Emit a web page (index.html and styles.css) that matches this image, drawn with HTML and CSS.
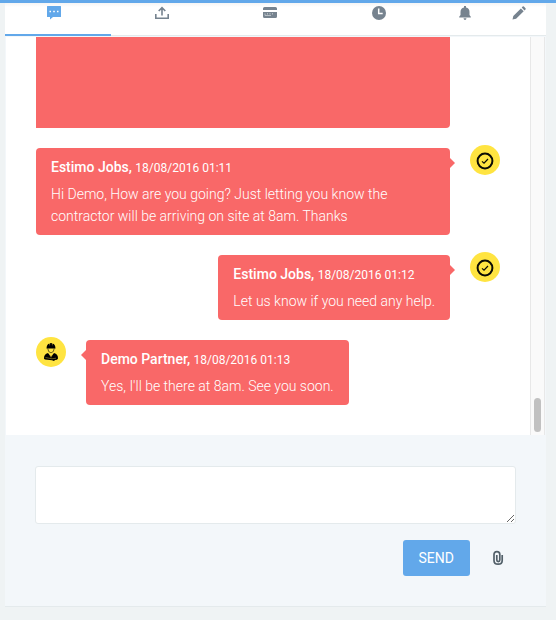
FILE: index.html
```html
<!DOCTYPE html>
<html lang="en">
<head>
<meta charset="utf-8">
<title>Job messages</title>
<link rel="stylesheet" href="styles.css">
</head>
<body>
<svg class="defs" aria-hidden="true">
  <symbol id="check" viewBox="0 0 30 30">
    <circle cx="15" cy="16" r="7.4" fill="none" stroke="#0b0b05" stroke-width="2"/>
    <path d="M12 16.400l2 1.800 4-4.200" fill="none" stroke="#0b0b05" stroke-width="1.200"/>
  </symbol>
</svg>
<main class="card">
  <nav class="tabs">
    <a class="tab active" href="#messages" aria-label="Messages"><svg width="16" height="16" viewBox="0 0 16 16"><path fill="currentColor" d="M1.500 1h13q.5 0 .5.500v10q0 .5-.5.500H7l-3 2.500V12H1.500Q1 12 1 11.500v-10q0-.5.500-.5z"/><path fill="#fff" d="M3.500 5.700H5v1.600H3.500zM7.200 5.700h1.600v1.600H7.200zM11 5.700h1.500v1.600H11z"/></svg></a>
    <a class="tab" href="#upload" aria-label="Upload"><svg width="16" height="16" viewBox="0 0 16 16"><path fill="none" stroke="currentColor" stroke-width="1.600" d="M1.800 9v4.200h12.400V9M8 10.500V3M4.700 6L8 2.700 11.300 6"/></svg></a>
    <a class="tab" href="#payments" aria-label="Payments"><svg width="16" height="16" viewBox="0 0 16 16"><path fill="currentColor" d="M2.500 2h11Q15 2 15 3.500V5H1V3.500Q1 2 2.500 2zM1 7h14v4.500q0 1.500-1.500 1.500h-11Q1 13 1 11.500z"/><path fill="none" stroke="#c5cbd0" stroke-width=".8" d="M3 8.500v2h6M5.500 8v1.500M8 8v1.500M10.500 9.500V8"/></svg></a>
    <a class="tab" href="#history" aria-label="History"><svg width="16" height="16" viewBox="0 0 16 16"><circle cx="8" cy="8" r="7" fill="currentColor"/><path fill="none" stroke="#fff" stroke-width="1.500" d="M7.700 3.500v5h4"/></svg></a>
    <a class="tab" href="#alerts" aria-label="Alerts"><svg width="16" height="16" viewBox="0 0 16 16"><path fill="currentColor" d="M7 2.500V1h2v1.500q3.500.8 3.500 4.500v3l1.300 1.700v.8H2.200v-.8L3.500 10V7Q3.500 3.300 7 2.500zM6.500 13.300h3q-.2 1.700-1.500 1.700t-1.500-1.700z"/></svg></a>
    <a class="tab" href="#edit" aria-label="Edit"><svg width="16" height="16" viewBox="0 0 16 16"><path fill="currentColor" d="M1.500 14.500l.8-3.600 7.600-7.500 2.800 2.800-7.600 7.500zM10.700 2.600l1-1q.6-.5 1.200 0l1.600 1.600q.5.600 0 1.200l-1 1z"/></svg></a>
  </nav>
  <section class="chat">
    <div class="messages">
      <article class="message sent"><div class="bubble attachment"></div></article>
      <article class="message sent">
        <div class="bubble">
          <p class="meta"><strong>Estimo Jobs,</strong> <time>18/08/2016 01:11</time></p>
          <p>Hi Demo, How are you going? Just letting you know the contractor will be arriving on site at 8am. Thanks</p>
        </div>
        <svg class="avatar" viewBox="0 0 30 30"><use href="#check"/></svg>
      </article>
      <article class="message sent">
        <div class="bubble">
          <p class="meta"><strong>Estimo Jobs,</strong> <time>18/08/2016 01:12</time></p>
          <p>Let us know if you need any help.</p>
        </div>
        <svg class="avatar" viewBox="0 0 30 30"><use href="#check"/></svg>
      </article>
      <article class="message received">
        <svg class="avatar" viewBox="0 0 30 30"><path d="M10.500 11.500q.2-4.500 3-5l.4 2.500.3-3h1.600l.3 3 .4-2.500q2.800.5 3 5z"/><path fill="none" stroke="#0b0b05" stroke-width=".6" d="M11.800 11.500q.2 3.800 3.200 4.400 3-.6 3.200-4.400"/><path d="M8 21.500q-.2-4.500 4-5.500l3 3.500 3-3.500q4.200 1 4 5.500-.5 1.500-3 1.500l-1 1-2-.7-7-.8q-1-.3-1-1z"/><path fill="none" stroke="#ffe441" stroke-width=".4" d="M13 16.300l2 4 2-4M9.500 20.500l6.500 1.300 4-.6"/></svg>
        <div class="bubble">
          <p class="meta"><strong>Demo Partner,</strong> <time>18/08/2016 01:13</time></p>
          <p>Yes, I'll be there at 8am. See you soon.</p>
        </div>
      </article>
    </div>
    <div class="track"><div class="thumb"></div></div>
  </section>
  <form class="composer">
    <textarea aria-label="Message"></textarea>
    <div class="actions">
      <button class="send" type="button">SEND</button>
      <button class="attach" type="button" aria-label="Attach a file"><svg width="16" height="16" viewBox="0 0 16 16"><path fill="none" stroke="currentColor" stroke-width="1.700" d="M12.200 5v5.500q0 3.700-4.100 3.700T4 10.500v-6Q4 1.700 6.900 1.700t2.900 2.800V10q0 1.600-1.500 1.600T6.800 10V5"/></svg></button>
    </div>
  </form>
</main>
</body>
</html>
```
FILE: styles.css
```css
* {
  box-sizing: border-box;
}

body {
  display: flex;
  flex-direction: column;
  height: 100vh;
  min-height: 480px;
  margin: 0;
  padding: 0 10px 13px 5px;
  border-top: 3px solid #62a8ea;
  background: #eff3f4;
  font: 400 14px/22px Roboto, "Liberation Sans", sans-serif;
}

.defs {
  position: absolute;
  width: 0;
  height: 0;
}

.card {
  display: flex;
  flex: 1;
  flex-direction: column;
  min-height: 0;
  border-bottom: 1px solid #e4eaec;
  background: #f3f7fa;
}

.tabs {
  display: grid;
  grid-template-columns: repeat(4, 20%) 12% 8%;
  height: 33px;
  margin-bottom: 1px;
  border-bottom: 1px solid #e4eaec;
  background: linear-gradient(#f5f5f5, #fff 4px);
}

.tab {
  height: 33px;
  margin-right: 2px;
  padding: 2px 8px 0 0;
  color: #76838f;
  text-align: center;
}

.tab svg {
  display: block;
  margin: 0 auto;
}

.tab.active {
  border-bottom: 2px solid #62a8ea;
  color: #62a8ea;
}

.chat {
  display: flex;
  flex: 1;
  min-height: 0;
  margin: 0 1px;
  background: #fff;
}

.messages {
  display: flex;
  flex: 1;
  flex-direction: column;
  justify-content: flex-end;
  gap: 20px;
  padding: 0 30px 30px;
  overflow: hidden;
}

.message {
  display: flex;
  gap: 20px;
}

.sent {
  justify-content: flex-end;
}

.bubble {
  position: relative;
  padding: 8px 15px;
  border-radius: 4px;
  background: #f96868;
  color: #fff;
  font-weight: 300;
}

.bubble::after {
  content: "";
  position: absolute;
  top: 10px;
  border: 5px solid transparent;
}

.sent .bubble::after {
  left: 100%;
  border-right-width: 0;
  border-left-color: #f96868;
}

.received .bubble::after {
  right: 100%;
  border-left-width: 0;
  border-right-color: #f96868;
}

.bubble p {
  margin: 0;
}

.bubble .meta {
  margin-bottom: 5px;
}

.meta strong {
  font-weight: 500;
}

.meta time {
  font-size: 12px;
  font-weight: 400;
  line-height: 1;
}

.attachment {
  flex: 1;
  height: 91px;
  margin-right: 50px;
  border-radius: 0 0 4px 0;
}

.sent .attachment::after {
  display: none;
}

.avatar {
  flex: none;
  width: 30px;
  height: 30px;
  margin-top: -3px;
  border-radius: 50%;
  background: #ffe441;
}

.track {
  display: flex;
  align-items: flex-end;
  width: 15px;
  padding: 3px;
  border: solid #e8e8e8;
  border-width: 0 1px;
  background: #fafafa;
}

.thumb {
  width: 8px;
  height: 34px;
  border-radius: 4px;
  background: #c1c1c1;
}

.composer {
  padding: 31px 30px 30px;
}

.composer textarea {
  display: block;
  width: 100%;
  height: 58px;
  padding: 6px 15px;
  border: 1px solid #e4eaec;
  border-radius: 3px;
  background: #fff;
  font: inherit;
  resize: vertical;
}

.actions {
  display: flex;
  justify-content: flex-end;
  gap: 10px;
  margin-top: 16px;
}

.actions button {
  height: 36px;
  border: 0;
  border-radius: 3px;
  font: inherit;
}

.send {
  padding: 0 16px;
  background: #62a8ea;
  color: #fff;
}

.attach {
  width: 36px;
  padding: 0 10px;
  background: transparent;
  color: #526069;
}

.attach svg {
  display: block;
}
```
